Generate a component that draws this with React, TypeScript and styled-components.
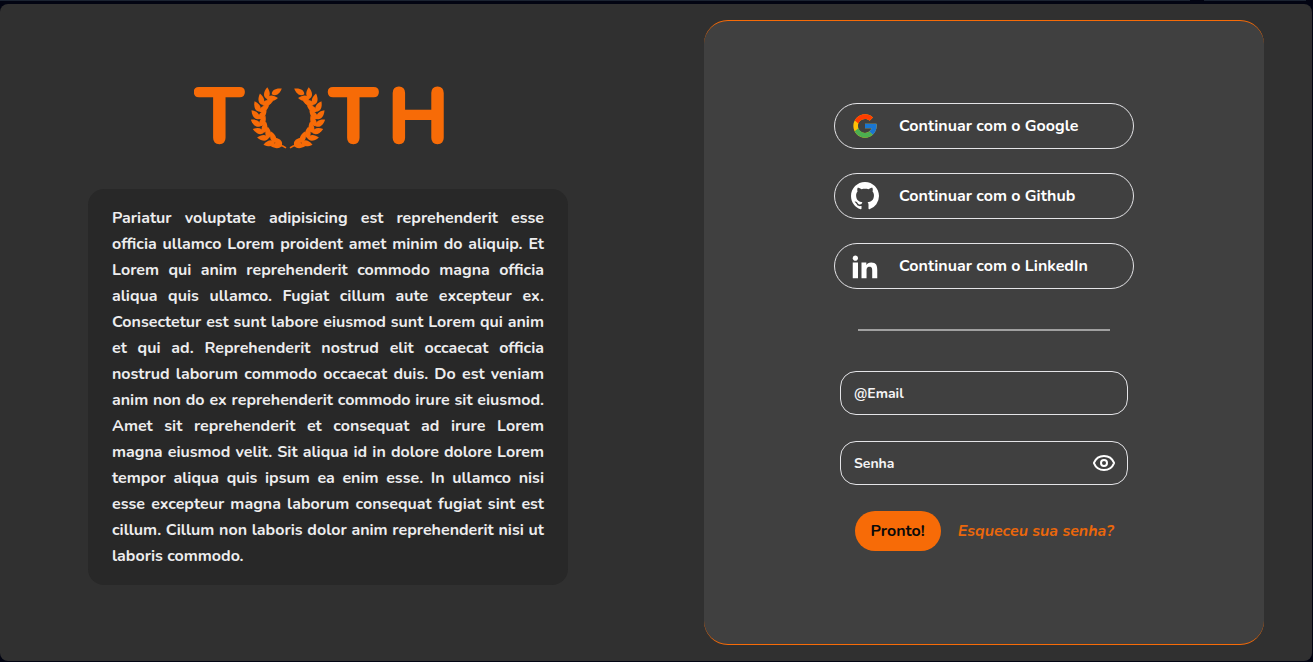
import React from 'react';
import styled, { createGlobalStyle } from 'styled-components';
import { FcGoogle } from 'react-icons/fc';
import { BsGithub } from 'react-icons/bs';
import { ImLinkedin2 } from 'react-icons/im';
import { Eye } from 'lucide-react';

const ORANGE = '#f76b07';
const LINE = '#e4e4e7';

const GlobalStyle = createGlobalStyle`
  *, *::before, *::after { box-sizing: border-box; }
  body {
    margin: 0;
    background: #020412;
    color: #f4f4f5;
    font-family: Nunito, Lato, sans-serif;
    font-size: 16px;
    font-weight: 700;
  }
  button, input { font: inherit; color: inherit; }
`;

const Shell = styled.div`
  display: flex;
  flex-direction: column;
  min-height: 100vh;
  padding: 0 1px 1px 0;
`;

const TopEdge = styled.div`
  display: grid;
  grid-template-columns: 1fr 102px;
  column-gap: 14px;
  height: 4px;
  padding-right: 6px;
`;

const EdgeSegment = styled.div`
  height: 1px;
  background: #1b2331;
`;

const Page = styled.main`
  flex: 1;
  display: grid;
  grid-template-columns: 1fr 1fr;
  border-radius: 8px;
  background: #303030;
`;

const Intro = styled.section`
  display: flex;
  flex-direction: column;
  align-items: center;
  justify-content: center;
  gap: 17px;
  padding-bottom: 17px;
`;

const LogoTitle = styled.h1`
  margin: 0;
  line-height: 0;
`;

const LogoLetter = styled.text`
  font-family: Nunito, Lato, sans-serif;
  font-weight: 800;
  font-size: 80px;
  fill: ${ORANGE};
`;

const Description = styled.p`
  width: 480px;
  max-width: 90%;
  margin: 0;
  padding: 16px 24px;
  border-radius: 16px;
  background: #282828;
  color: #ededee;
  line-height: 26px;
  text-align: justify;
`;

const AccessCard = styled.section`
  display: flex;
  flex-direction: column;
  align-items: center;
  justify-content: center;
  width: 560px;
  max-width: 90%;
  margin: 16px auto;
  padding-bottom: 12px;
  border: 0 solid ${ORANGE};
  border-width: 1px 0;
  border-radius: 24px;
  background: #404040;
`;

const ProviderList = styled.div`
  display: flex;
  flex-direction: column;
  gap: 24px;
  width: 300px;
`;

const ProviderButton = styled.button`
  display: flex;
  align-items: center;
  gap: 20px;
  height: 46px;
  padding: 0 16px;
  border: 1px solid ${LINE};
  border-radius: 24px;
  background: transparent;
  color: #fff;
  cursor: pointer;
`;

const Divider = styled.hr`
  width: 252px;
  height: 2px;
  margin: 40px 0;
  border: 0;
  background: #a0a0a0;
`;

const Form = styled.form`
  display: flex;
  flex-direction: column;
  gap: 26px;
  width: 288px;
`;

const Field = styled.div`
  display: flex;
  align-items: center;
  height: 44px;
  padding: 0 11px 0 13px;
  border: 1px solid ${LINE};
  border-radius: 16px;
`;

const FieldInput = styled.input`
  flex: 1;
  min-width: 0;
  padding: 2px 0 0;
  border: 0;
  outline: 0;
  background: transparent;
  font-size: 14px;
  &::placeholder { color: #f4f4f5; opacity: 1; }
`;

const RevealButton = styled.button`
  display: flex;
  padding: 0;
  border: 0;
  background: transparent;
  color: #fff;
  cursor: pointer;
`;

const Actions = styled.div`
  display: flex;
  align-items: center;
  justify-content: center;
  gap: 17px;
`;

const SubmitButton = styled.button`
  height: 40px;
  padding: 0 16px;
  border: 0;
  border-radius: 20px;
  background: ${ORANGE};
  color: #0a0a0a;
  cursor: pointer;
`;

const ForgotLink = styled.a`
  color: #ea670b;
  font-style: italic;
  text-decoration: none;
`;

const LEAF = 'M0 0C-3.800 -1.600 -4.200 -6.200 -.8 -11.500C3.200 -7.400 4 -2.400 0 0Z';
const LEAF_STEPS = [0, 1, 2, 3, 4, 5, 6, 7, 8];

const onArc = (angle: number) => {
  const rad = (angle * Math.PI) / 180;
  return `translate(${(94 + 29 * Math.cos(rad)).toFixed(2)} ${(54.5 + 28 * Math.sin(rad)).toFixed(2)})`;
};

// One branch of the laurel: leaf pairs follow an arc from the stem to the tip.
const Branch = () => (
  <g fill={ORANGE}>
    {LEAF_STEPS.map((step) => {
      const angle = 102 + step * 15;
      return (
        <g key={step} transform={`${onArc(angle)} rotate(${angle - 180})`}>
          <path d={LEAF} transform={`rotate(${step === 0 ? -14 : -34})`} />
          <path d={LEAF} transform={`rotate(${step === 0 ? 24 : 40}) scale(-1 1)`} />
        </g>
      );
    })}
    <path d={LEAF} transform={`${onArc(236)} rotate(64)`} />
    <path
      d="M92 84.800C90 83.400 88 82.600 85 82.300"
      fill="none"
      stroke={ORANGE}
      strokeWidth="1.600"
    />
  </g>
);

const Logo = () => (
  <svg width="268" height="109" viewBox="0 0 268 109" role="img" aria-label="TOTH">
    <LogoLetter x="0" y="80">T</LogoLetter>
    <Branch />
    <g transform="translate(188 0) scale(-1 1)">
      <Branch />
    </g>
    <LogoLetter x="134" y="80">T</LogoLetter>
    <LogoLetter x="193" y="80">H</LogoLetter>
  </svg>
);

const providers = [
  { name: 'Google', Icon: FcGoogle },
  { name: 'Github', Icon: BsGithub },
  { name: 'LinkedIn', Icon: ImLinkedin2 },
];

export default function App() {
  return (
    <>
      <GlobalStyle />
      <Shell>
        <TopEdge>
          <EdgeSegment />
          <EdgeSegment />
        </TopEdge>
        <Page>
          <Intro>
            <LogoTitle><Logo /></LogoTitle>
            <Description>
              Pariatur voluptate adipisicing est reprehenderit esse officia ullamco Lorem proident amet
              minim do aliquip. Et Lorem qui anim reprehenderit commodo magna officia aliqua quis
              ullamco. Fugiat cillum aute excepteur ex. Consectetur est sunt labore eiusmod sunt Lorem
              qui anim et qui ad. Reprehenderit nostrud elit occaecat officia nostrud laborum commodo
              occaecat duis. Do est veniam anim non do ex reprehenderit commodo irure sit eiusmod. Amet
              sit reprehenderit et consequat ad irure Lorem magna eiusmod velit. Sit aliqua id in dolore
              dolore Lorem tempor aliqua quis ipsum ea enim esse. In ullamco nisi esse excepteur magna
              laborum consequat fugiat sint est cillum. Cillum non laboris dolor anim reprehenderit nisi
              ut laboris commodo.
            </Description>
          </Intro>
          <AccessCard>
            <ProviderList>
              {providers.map(({ name, Icon }) => (
                <ProviderButton key={name} type="button">
                  <Icon size={28} aria-hidden="true" />
                  Continuar com o {name}
                </ProviderButton>
              ))}
            </ProviderList>
            <Divider />
            <Form onSubmit={(event) => event.preventDefault()}>
              <Field>
                <FieldInput type="email" placeholder="@Email" aria-label="Email" />
              </Field>
              <Field>
                <FieldInput type="password" placeholder="Senha" aria-label="Senha" />
                <RevealButton type="button" aria-label="Mostrar senha">
                  <Eye size={24} aria-hidden="true" />
                </RevealButton>
              </Field>
              <Actions>
                <SubmitButton type="submit">Pronto!</SubmitButton>
                <ForgotLink href="#senha">Esqueceu sua senha?</ForgotLink>
              </Actions>
            </Form>
          </AccessCard>
        </Page>
      </Shell>
    </>
  );
}
